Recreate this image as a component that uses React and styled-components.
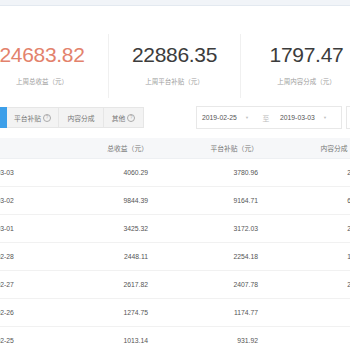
import React from "react";
import styled, { createGlobalStyle } from "styled-components";

const GlobalStyle = createGlobalStyle`
  html, body {
    margin: 0;
    padding: 0;
    background: #ffffff;
    font-family: "Liberation Sans", "Noto Sans CJK SC", sans-serif;
  }
`;

const stats = [
  { value: "24683.82", label: "上周总收益（元）", accent: true },
  { value: "22886.35", label: "上周平台补贴（元）" },
  { value: "1797.47", label: "上周内容分成（元）" },
];

const tabs = [
  { name: "总收益", info: false, active: true, w: 50 },
  { name: "平台补贴", info: true, w: 52 },
  { name: "内容分成", info: false, w: 45 },
  { name: "其他", info: true, w: 40 },
];

const rows = [
  ["2019-03-03", "4060.29", "3780.96", "279.33"],
  ["2019-03-02", "9844.39", "9164.71", "679.68"],
  ["2019-03-01", "3425.32", "3172.03", "253.29"],
  ["2019-02-28", "2448.11", "2254.18", "193.93"],
  ["2019-02-27", "2617.82", "2407.78", "210.04"],
  ["2019-02-26", "1274.75", "1174.77", "99.98"],
  ["2019-02-25", "1013.14", "931.92", "81.22"],
];

const Page = styled.div`
  width: 350px;
  height: 350px;
  overflow: hidden;
  background: #fff;
`;

const TopStrip = styled.div`
  height: 5px;
  background: #f1f4f8;
  border-bottom: 1px solid #e3e9f0;
`;

const Canvas = styled.div`
  width: 470px;
  margin-left: -50px;
`;

const StatsRow = styled.div`
  display: grid;
  grid-template-columns: repeat(3, 132px);
  padding: 28px 0 0 26px;
  height: 72px;
`;

const Stat = styled.div`
  display: flex;
  flex-direction: column;
  align-items: center;
  padding-top: 10px;
  height: 54px;
  border-left: ${(p) => (p.$first ? "none" : "1px solid #f0f0f0")};
`;

const StatValue = styled.div`
  font-size: 21px;
  line-height: 22px;
  color: ${(p) => (p.$accent ? "#e3826c" : "#3c3c3c")};
  letter-spacing: -0.3px;
`;

const StatLabel = styled.div`
  margin-top: 10px;
  font-size: 6.5px;
  color: #a0a0a0;
`;

const Toolbar = styled.div`
  display: flex;
  align-items: center;
  padding-left: 7px;
  height: 23px;
`;

const TabGroup = styled.div`
  display: flex;
  height: 21px;
`;

const Tab = styled.div`
  display: flex;
  align-items: center;
  justify-content: center;
  gap: 2px;
  width: ${(p) => p.$w}px;
  font-size: 6.8px;
  color: ${(p) => (p.$active ? "#fff" : "#777")};
  background: ${(p) => (p.$active ? "#3d9fe9" : "#f3f3f3")};
  border: 1px solid ${(p) => (p.$active ? "#3d9fe9" : "#e6e6e6")};
  border-left-width: ${(p) => (p.$first ? 1 : 0)}px;
  box-sizing: border-box;
`;

const InfoIcon = styled.span`
  display: inline-flex;
  align-items: center;
  justify-content: center;
  width: 6px;
  height: 6px;
  border: 0.6px solid #aaa;
  border-radius: 50%;
  font-size: 4.5px;
  color: #aaa;
`;

const DateBox = styled.div`
  display: flex;
  align-items: center;
  margin-left: 52px;
  width: 146px;
  height: 23px;
  border: 1px solid #e8e8e8;
  box-sizing: border-box;
  font-size: 6.8px;
  color: #555;
  padding-left: 5px;
`;

const DateText = styled.span`
  width: 40px;
`;

const Caret = styled.span`
  font-size: 4px;
  color: #c0c0c0;
  width: 10px;
  text-align: center;
`;

const Sep = styled.span`
  color: #bbb;
  width: 28px;
  text-align: center;
`;

const ExtraBox = styled.div`
  margin-left: 4px;
  width: 40px;
  height: 23px;
  border: 1px solid #e8e8e8;
  box-sizing: border-box;
`;

const Table = styled.div`
  margin-top: 9px;
`;

const Row = styled.div`
  display: grid;
  grid-template-columns: 110px 98px 110px 110px;
  align-items: center;
  height: ${(p) => (p.$head ? 21 : 28)}px;
  background: ${(p) => (p.$head ? "#f6f7f9" : "#fff")};
  border-bottom: 1px solid ${(p) => (p.$head ? "#eef0f3" : "#f1f1f1")};
  box-sizing: border-box;
  font-size: 6.8px;
  color: ${(p) => (p.$head ? "#777" : "#555")};
`;

const Cell = styled.div`
  white-space: nowrap;
  text-align: ${(p) => (p.$left ? "left" : "right")};
  padding: ${(p) => (p.$left ? "0 0 0 29px" : "0 10px 0 0")};
`;

export default function App() {
  return (
    <Page>
      <GlobalStyle />
      <TopStrip />
      <Canvas>
        <StatsRow>
          {stats.map((s, i) => (
            <Stat key={s.label} $first={i === 0}>
              <StatValue $accent={s.accent}>{s.value}</StatValue>
              <StatLabel>{s.label}</StatLabel>
            </Stat>
          ))}
        </StatsRow>
        <Toolbar>
          <TabGroup>
            {tabs.map((t, i) => (
              <Tab key={t.name} $active={t.active} $first={i === 0} $w={t.w}>
                {t.name}
                {t.info && <InfoIcon>?</InfoIcon>}
              </Tab>
            ))}
          </TabGroup>
          <DateBox>
            <DateText>2019-02-25</DateText>
            <Caret>▼</Caret>
            <Sep>至</Sep>
            <DateText>2019-03-03</DateText>
            <Caret>▼</Caret>
          </DateBox>
          <ExtraBox />
        </Toolbar>
        <Table>
          <Row $head>
            <Cell $left>日期</Cell>
            <Cell>总收益（元）</Cell>
            <Cell>平台补贴（元）</Cell>
            <Cell>内容分成（元）</Cell>
          </Row>
          {rows.map((r) => (
            <Row key={r[0]}>
              <Cell $left>{r[0]}</Cell>
              <Cell>{r[1]}</Cell>
              <Cell>{r[2]}</Cell>
              <Cell>{r[3]}</Cell>
            </Row>
          ))}
        </Table>
      </Canvas>
    </Page>
  );
}
